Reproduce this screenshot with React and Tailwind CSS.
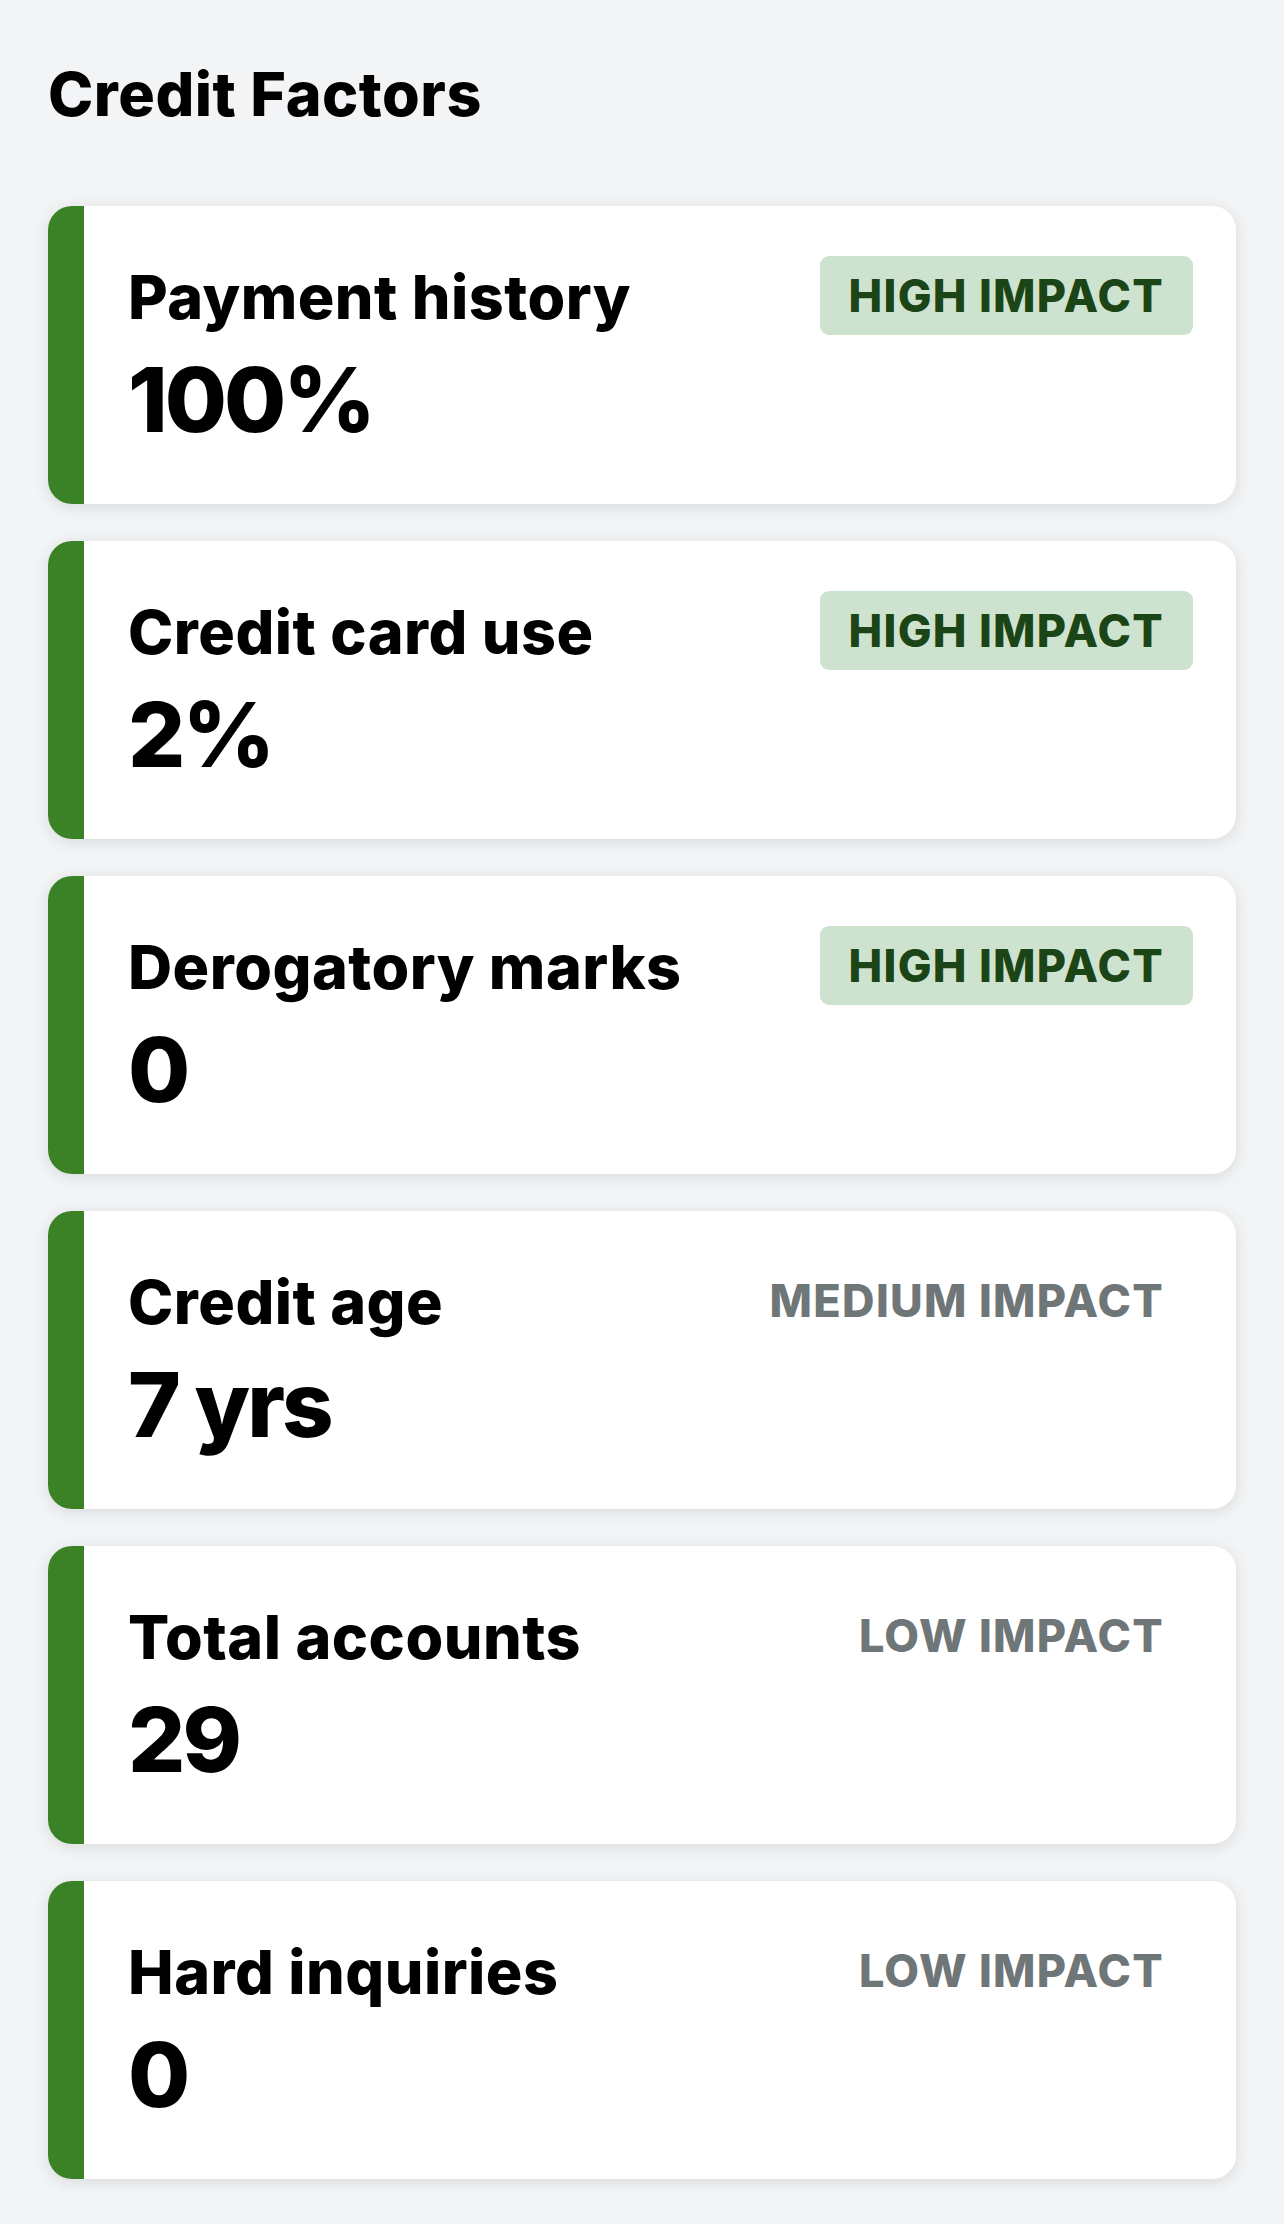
import React from "react";

const factors = [
  { name: "Payment history", value: "100%", impact: "HIGH IMPACT", high: true },
  { name: "Credit card use", value: "2%", impact: "HIGH IMPACT", high: true },
  { name: "Derogatory marks", value: "0", impact: "HIGH IMPACT", high: true },
  { name: "Credit age", value: "7 yrs", impact: "MEDIUM IMPACT", high: false },
  { name: "Total accounts", value: "29", impact: "LOW IMPACT", high: false },
  { name: "Hard inquiries", value: "0", impact: "LOW IMPACT", high: false },
];

function FactorCard({ name, value, impact, high }) {
  return (
    <div className="flex overflow-hidden rounded-[24px] bg-white shadow-[0_3px_16px_rgba(0,0,0,0.11)]">
      <div className="w-[36px] shrink-0 bg-[#3b8226]" />
      <div className="flex flex-1 items-start justify-between pl-[44px] pr-[43px] pt-[55px] pb-[59px]">
        <div className="flex flex-col">
          <div className="text-[61px] font-extrabold leading-[72px] tracking-[0.5px] text-black">{name}</div>
          <div className="mt-[22px] text-[90px] font-extrabold leading-[90px] tracking-[-3px] text-black">{value}</div>
        </div>
        <div
          className={
            high
              ? "-mt-[5px] flex h-[79px] items-center rounded-[9px] bg-[#cee3cf] px-[29px] text-[45px] font-extrabold leading-[54px] tracking-[1.3px] text-[#1b4516]"
              : "-mt-[5px] flex h-[79px] items-center rounded-[9px] px-[29px] text-[45px] font-extrabold leading-[54px] tracking-[1.3px] text-[#6f7677]"
          }
        >
          {impact}
        </div>
      </div>
    </div>
  );
}

export default function App() {
  return (
    <div
      className="min-h-[2224px] w-full bg-[#f3f4f6] px-[48px] pt-[58px] pb-[45px]"
      style={{ fontFamily: "Inter, 'Liberation Sans', sans-serif" }}
    >
      <h1 className="mb-[76px] text-[61px] font-extrabold leading-[72px] tracking-[0.5px] text-black">Credit Factors</h1>
      <div className="flex flex-col gap-[37px]">
        {factors.map((f) => (
          <FactorCard key={f.name} {...f} />
        ))}
      </div>
    </div>
  );
}
